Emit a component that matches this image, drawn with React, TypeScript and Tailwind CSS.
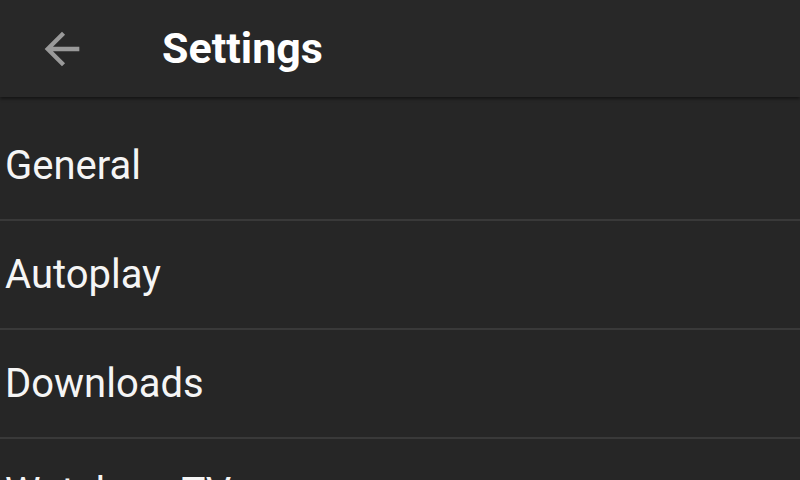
const items = ["General", "Autoplay", "Downloads", "Watch on TV", "Privacy"];

function BackArrow() {
  return (
    <svg viewBox="0 0 24 24" className="h-[52px] w-[52px]" fill="#9a9a9a">
      <path d="M20 11H7.83l5.59-5.59L12 4l-8 8 8 8 1.41-1.41L7.83 13H20v-2z" />
    </svg>
  );
}

export default function App() {
  return (
    <div
      className="h-[480px] w-[800px] overflow-hidden bg-[#262626] text-white"
      style={{ fontFamily: "Roboto, 'Noto Sans', sans-serif" }}
    >
      <header className="flex h-[97px] items-center bg-[#282828] shadow-[0_2px_3px_rgba(0,0,0,0.45)]">
        <div className="ml-[36px] flex items-center">
          <BackArrow />
        </div>
        <h1 className="ml-[74px] text-[43px] font-bold leading-none">Settings</h1>
      </header>

      <div className="pt-[15px]">
        {items.map((label) => (
          <div
            key={label}
            className="flex h-[109px] items-center border-b-2 border-[#393939] pl-[5px]"
          >
            <span className="text-[40px] leading-none text-[#f5f5f5]">{label}</span>
          </div>
        ))}
      </div>
    </div>
  );
}
